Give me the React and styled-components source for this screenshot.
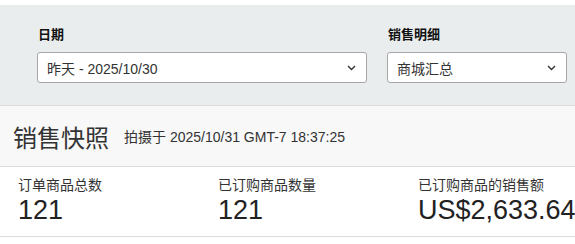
import React from 'react'
import styled, { createGlobalStyle } from 'styled-components'

const GlobalStyle = createGlobalStyle`
  body {
    margin: 0;
    background: #fff;
    font-family: "Liberation Sans", Arial, "Noto Sans CJK SC", sans-serif;
    color: #111;
  }
`

const Page = styled.div`
  padding-top: 5px;
  width: 575px;
  overflow: hidden;
`

const FilterBar = styled.div`
  display: flex;
  gap: 20px;
  background: #eaeded;
  padding: 22px 0 22px 37px;
`

const Field = styled.div`
  display: flex;
  flex-direction: column;
  width: ${props => props.width}px;
`

const Label = styled.div`
  font-size: 13px;
  font-weight: bold;
  line-height: 16px;
  color: #111;
  margin-bottom: 9px;
  padding-left: 1px;
`

const SelectBox = styled.div`
  display: flex;
  align-items: center;
  justify-content: space-between;
  box-sizing: border-box;
  height: 31px;
  padding: 0 10px 0 9px;
  background: #fff;
  border: 1px solid #a6a6a6;
  border-radius: 3px;
  font-size: 14px;
  color: #333;
`

const Chevron = () => (
  <svg width="9" height="6" viewBox="0 0 9 6">
    <path d="M1 1l3.5 3.5L8 1" fill="none" stroke="#333" strokeWidth="1.4" />
  </svg>
)

const Snapshot = styled.div`
  border-top: 1px solid #dcdcdc;
  border-bottom: 1px solid #dcdcdc;
`

const Header = styled.div`
  display: flex;
  align-items: center;
  height: 60px;
  padding-left: 13px;
  background: #f8f8f8;
  border-bottom: 1px solid #dcdcdc;
`

const Title = styled.h1`
  margin: 0 15px 0 0;
  font-size: 24px;
  font-weight: normal;
  color: #333;
`

const Stamp = styled.span`
  font-size: 14px;
  color: #333;
`

const Metrics = styled.div`
  display: grid;
  grid-template-columns: 200px 200px 200px;
  padding: 10px 0 9px 18px;
`

const Metric = styled.div`
  display: flex;
  flex-direction: column;
`

const MetricLabel = styled.div`
  font-size: 14px;
  line-height: 17px;
  color: #333;
`

const MetricValue = styled.div`
  font-size: 27px;
  line-height: 33px;
  color: #222;
  white-space: nowrap;
`

const metrics = [
  { label: '订单商品总数', value: '121' },
  { label: '已订购商品数量', value: '121' },
  { label: '已订购商品的销售额', value: 'US$2,633.64' },
]

export default function App() {
  return (
    <Page>
      <GlobalStyle />
      <FilterBar>
        <Field width={330}>
          <Label>日期</Label>
          <SelectBox>
            <span>昨天 - 2025/10/30</span>
            <Chevron />
          </SelectBox>
        </Field>
        <Field width={180}>
          <Label>销售明细</Label>
          <SelectBox>
            <span>商城汇总</span>
            <Chevron />
          </SelectBox>
        </Field>
      </FilterBar>
      <Snapshot>
        <Header>
          <Title>销售快照</Title>
          <Stamp>拍摄于 2025/10/31 GMT-7 18:37:25</Stamp>
        </Header>
        <Metrics>
          {metrics.map(m => (
            <Metric key={m.label}>
              <MetricLabel>{m.label}</MetricLabel>
              <MetricValue>{m.value}</MetricValue>
            </Metric>
          ))}
        </Metrics>
      </Snapshot>
    </Page>
  )
}
